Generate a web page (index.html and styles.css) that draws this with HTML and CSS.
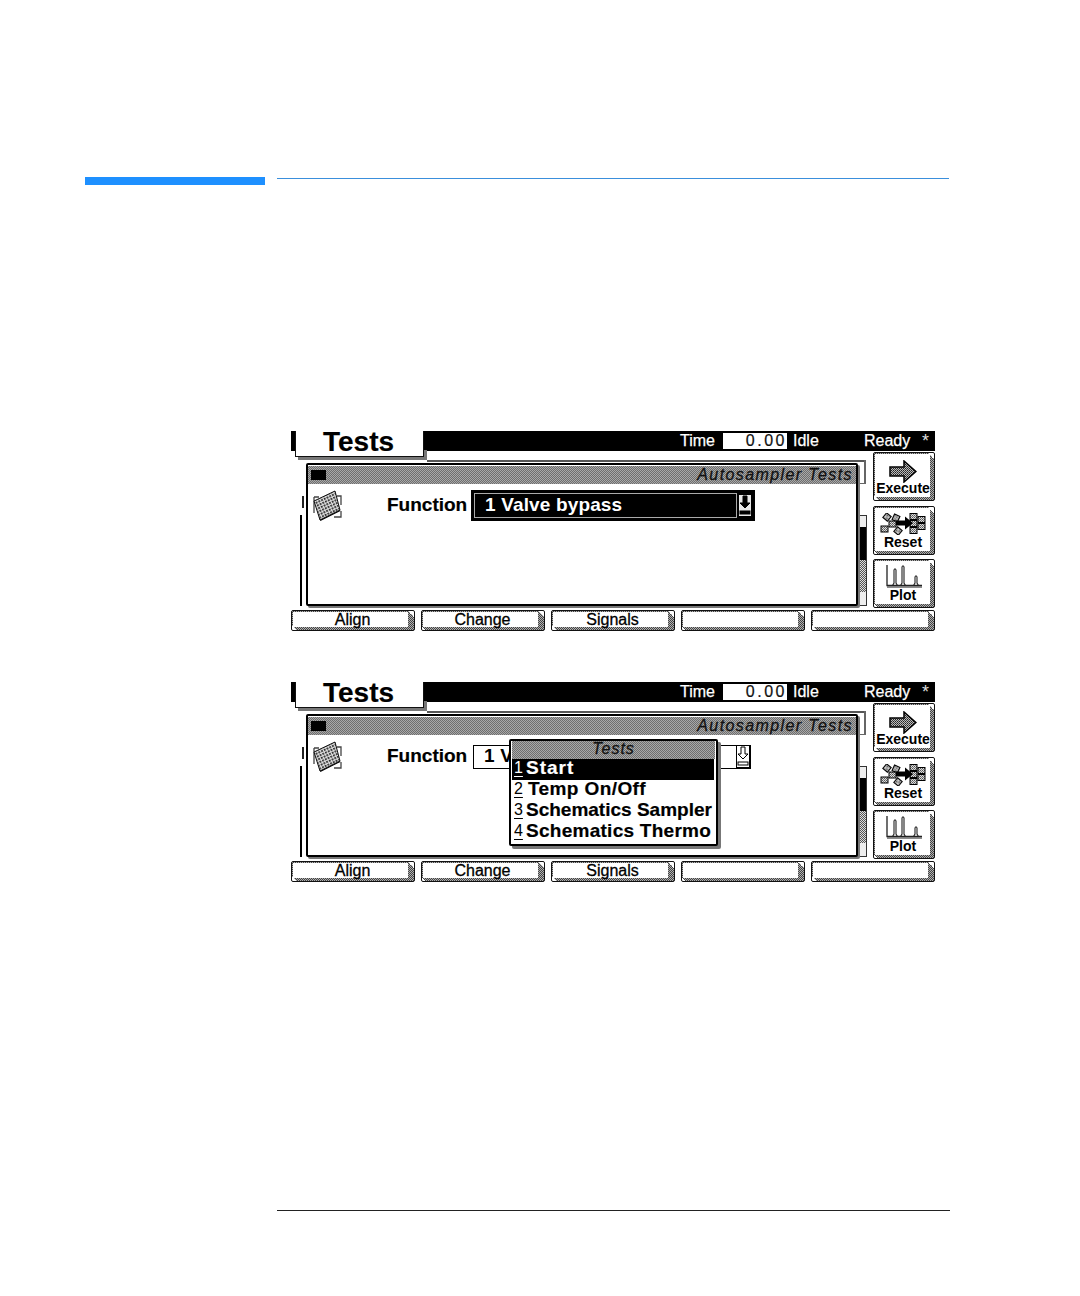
FILE: index.html
```html
<!DOCTYPE html>
<html lang="en">
<head>
<meta charset="utf-8">
<title>Autosampler Tests</title>
<link rel="stylesheet" href="styles.css">
</head>
<body>
<svg class="defs" aria-hidden="true">
  <defs>
    <pattern id="dots" width="2" height="2" patternUnits="userSpaceOnUse"><rect width="2" height="2" fill="#bbb"/><rect width="1" height="1" fill="#222"/><rect x="1" y="1" width="1" height="1" fill="#444"/></pattern>
    <pattern id="dots-light" width="2" height="2" patternUnits="userSpaceOnUse"><rect width="2" height="2" fill="#ddd"/><rect width="1" height="1" fill="#555"/><rect x="1" y="1" width="1" height="1" fill="#777"/></pattern>
    <pattern id="plate" width="3" height="3" patternUnits="userSpaceOnUse" patternTransform="rotate(-25)"><rect width="3" height="3" fill="#ddd"/><rect width="1.800" height="1.800" fill="#222"/></pattern>
    <symbol id="i-plate" viewBox="0 0 29 31">
      <path d="M1 7h5M24 6h4v9M1 7v16M28 21v6h-7" fill="none" stroke="#444" stroke-width="1.300"/>
      <path d="M7 30L27 20" fill="none" stroke="#000" stroke-width="2"/>
      <polygon points="22,1 1,11 7,30 27,20" fill="url(#plate)" stroke="#111" stroke-width="1"/>
    </symbol>
    <symbol id="i-arrow" viewBox="0 0 28 23">
      <polygon points="1,7 15,7 15,1 27,11.500 15,22 15,16 1,16" fill="url(#dots)" stroke="#000" stroke-width="1.500"/>
    </symbol>
    <symbol id="i-reset" viewBox="0 0 46 22">
      <g fill="url(#dots-light)" stroke="#000" stroke-width="1">
        <rect x="4" y="1" width="6" height="6" transform="rotate(40 7 4)"/>
        <rect x="13" y="2" width="6" height="6" transform="rotate(25 16 5)"/>
        <rect x="1" y="13" width="7" height="6"/>
        <rect x="9" y="8" width="7" height="6"/>
        <rect x="15" y="15" width="6" height="6" transform="rotate(40 18 18)"/>
        <rect x="30" y="0.500" width="7" height="6"/>
        <rect x="38" y="3.500" width="7" height="6"/>
        <rect x="30" y="7.500" width="7" height="6"/>
        <rect x="38" y="10.500" width="7" height="6"/>
        <rect x="30" y="14.500" width="7" height="6"/>
      </g>
      <path d="M16 7.500h9v-4l8 6.500-8 6.500v-4h-9z" fill="#000"/>
    </symbol>
    <symbol id="i-plot" viewBox="0 0 38 26">
      <path d="M3 3V23.500H38" fill="none" stroke="#222" stroke-width="1.300"/>
      <path d="M3 25H38" stroke="#666" stroke-width="1.500"/>
      <path d="M8.500 23.500L10 21V8Q11 5.500 12 8V21L13.500 23.500M16.500 23.500L18 21V5Q19 2.500 20 5V21L21.500 23.500M29.500 23.500L31 21V15Q32 12.500 33 15V21L34.500 23.500" fill="none" stroke="#222" stroke-width="1.100"/>
    </symbol>
    <symbol id="i-down" viewBox="0 0 12 21">
      <path d="M4 1h4v7h3l-5 5-5-5h3z" fill="currentColor" stroke="#000"/>
      <rect x="1" y="16" width="10" height="3" fill="currentColor" stroke="#000"/>
    </symbol>
  </defs>
</svg>

<main class="page">
  <div class="rule-top">
    <div class="rule-tab"></div>
    <div class="rule-line"></div>
  </div>

  <div class="screens">
    <section class="screen">
      <header class="topbar">
        <div class="tab">Tests</div>
        <div class="status">
          <span class="st-time">Time</span>
          <span class="st-value">0.00</span>
          <span class="st-idle">Idle</span>
          <span class="st-ready">Ready</span>
          <span class="st-star">*</span>
        </div>
      </header>
      <div class="work">
        <div class="desk">
          <div class="back-edge"></div>
          <div class="back-tick"></div>
          <div class="back-left"></div>
          <div class="back-short"></div>
          <div class="scroll"><div class="scroll-thumb"></div><div class="scroll-rest"></div></div>
          <div class="panel">
            <div class="titlebar"><span class="sysbox"></span><span class="title">Autosampler Tests</span></div>
            <div class="form">
              <svg class="plate"><use href="#i-plate"/></svg>
              <span class="label">Function</span>
              <div class="select is-active">
                <div class="select-inner"><span class="select-text">1 Valve bypass</span></div>
                <svg class="select-arrow"><use href="#i-down"/></svg>
              </div>
            </div>
          </div>
        </div>
        <div class="side">
          <button class="key side-key"><span class="face"><svg class="ic-arrow"><use href="#i-arrow"/></svg><span>Execute</span></span></button>
          <button class="key side-key"><span class="face"><svg class="ic-reset"><use href="#i-reset"/></svg><span>Reset</span></span></button>
          <button class="key side-key"><span class="face"><svg class="ic-plot"><use href="#i-plot"/></svg><span>Plot</span></span></button>
        </div>
      </div>
      <nav class="softkeys">
        <button class="key soft"><span class="face">Align</span></button>
        <button class="key soft"><span class="face">Change</span></button>
        <button class="key soft"><span class="face">Signals</span></button>
        <button class="key soft"><span class="face"></span></button>
        <button class="key soft"><span class="face"></span></button>
      </nav>
    </section>

    <section class="screen">
      <header class="topbar">
        <div class="tab">Tests</div>
        <div class="status">
          <span class="st-time">Time</span>
          <span class="st-value">0.00</span>
          <span class="st-idle">Idle</span>
          <span class="st-ready">Ready</span>
          <span class="st-star">*</span>
        </div>
      </header>
      <div class="work">
        <div class="desk">
          <div class="back-edge"></div>
          <div class="back-tick"></div>
          <div class="back-left"></div>
          <div class="back-short"></div>
          <div class="scroll"><div class="scroll-thumb"></div><div class="scroll-rest"></div></div>
          <div class="panel">
            <div class="titlebar"><span class="sysbox"></span><span class="title">Autosampler Tests</span></div>
            <div class="form">
              <svg class="plate"><use href="#i-plate"/></svg>
              <span class="label">Function</span>
              <div class="select is-plain">
                <div class="select-inner"><span class="select-text">1 V</span></div>
                <svg class="select-arrow"><use href="#i-down"/></svg>
              </div>
            </div>
            <div class="menu">
              <div class="menu-title">Tests</div>
              <div class="menu-item is-current"><span class="num">1</span><span class="item-start">Start</span></div>
              <div class="menu-item"><span class="num">2</span><span class="item-temp">Temp On/Off</span></div>
              <div class="menu-item"><span class="num">3</span><span>Schematics Sampler</span></div>
              <div class="menu-item"><span class="num">4</span><span class="item-thermo">Schematics Thermo</span></div>
            </div>
          </div>
        </div>
        <div class="side">
          <button class="key side-key"><span class="face"><svg class="ic-arrow"><use href="#i-arrow"/></svg><span>Execute</span></span></button>
          <button class="key side-key"><span class="face"><svg class="ic-reset"><use href="#i-reset"/></svg><span>Reset</span></span></button>
          <button class="key side-key"><span class="face"><svg class="ic-plot"><use href="#i-plot"/></svg><span>Plot</span></span></button>
        </div>
      </div>
      <nav class="softkeys">
        <button class="key soft"><span class="face">Align</span></button>
        <button class="key soft"><span class="face">Change</span></button>
        <button class="key soft"><span class="face">Signals</span></button>
        <button class="key soft"><span class="face"></span></button>
        <button class="key soft"><span class="face"></span></button>
      </nav>
    </section>
  </div>

  <div class="rule-bottom"></div>
</main>
</body>
</html>
```

FILE: styles.css
```css
* { box-sizing: border-box; }
html, body { margin: 0; padding: 0; background: #fff; }
body { font-family: "Liberation Sans", Arial, sans-serif; color: #000; }
.defs { display: block; width: 0; height: 0; }

.page { width: 1080px; height: 1296px; padding: 177px 0 0 85px; }

.rule-top { display: flex; align-items: flex-start; gap: 12px; }
.rule-tab { width: 180px; height: 8px; background: #1e90ff; }
.rule-line { width: 672px; height: 1px; margin-top: 1px; background: #3a8fdc; }

.screens { display: flex; flex-direction: column; gap: 51px; margin: 246px 0 0 206px; width: 644px; }
.rule-bottom { width: 673px; height: 1px; margin: 328px 0 0 192px; background: #222; }

.screen { width: 644px; height: 200px; display: flex; flex-direction: column; }

/* top bar */
.topbar { height: 20px; flex: none; display: flex; background: #000; position: relative; }
.tab {
  width: 129px; height: 26px; margin-left: 4px; flex: none;
  background: #fff; border: 1px solid #111; border-top: 0;
  font-size: 28px; font-weight: 700; line-height: 22px; padding-left: 27px;
  box-shadow: 3px 3px 0 #777; -webkit-text-stroke: .2px #000;
  clip-path: polygon(0 0, 100% 0, 100% 19px, calc(100% + 4px) 19px, calc(100% + 4px) calc(100% + 4px), 0 calc(100% + 4px));
  z-index: 1;
}
.status { flex: 1; display: flex; align-items: center; color: #fff; font-size: 16px; line-height: 18px; height: 18px; margin-top: 1px; }
.st-time { margin-left: 256px; width: 43px; -webkit-text-stroke: .25px #fff; }
.st-value { width: 64px; height: 16px; background: #fff; color: #111; text-align: right; letter-spacing: 2.500px; line-height: 16px; -webkit-text-stroke: .2px #111; }
.st-idle { margin-left: 6px; width: 71px; -webkit-text-stroke: .25px #fff; }
.st-ready { width: 58px; -webkit-text-stroke: .25px #fff; }
.st-star { font-size: 18px; color: #ddd; }

/* working area */
.work { height: 159px; flex: none; display: flex; padding-top: 1px; }
.desk { width: 582px; flex: none; position: relative; }

.back-edge { position: absolute; left: 136px; right: 7px; top: 8px; height: 2px; background: #555; }
.back-tick { position: absolute; right: 7px; top: 8px; width: 10px; height: 24px; border-right: 2px solid #666; border-bottom: 1px solid #666; }
.back-left { position: absolute; left: 9px; top: 63px; width: 2px; height: 91px; background: #000; }
.back-short { position: absolute; left: 11px; top: 44px; width: 2px; height: 12px; background: #222; }
.scroll { position: absolute; left: 566px; top: 63px; width: 10px; height: 91px; border: 1px solid #333; background: #eee; padding-top: 11px; }
.scroll-thumb { height: 33px; background: #000; }
.scroll-rest { height: 32px; background: repeating-conic-gradient(#555 0 25%, #ddd 0 50%) 0 0 / 2px 2px; }

.panel {
  position: absolute; left: 15px; top: 11px; width: 552px; height: 143px;
  background: #fff; border: 2px solid #000; border-radius: 2px;
  box-shadow: 2px 2px 0 #777;
}
.titlebar {
  height: 18px; margin: 1px 0 0; display: flex; align-items: center; justify-content: space-between;
  padding: 0 3px;
  background: repeating-conic-gradient(#6e6e6e 0 25%, #a8a8a8 0 50%) 0 0 / 2px 2px;
}
.sysbox { width: 15px; height: 10px; background: #000; }
.title { font-size: 16px; font-style: italic; letter-spacing: 1.400px; color: #111; line-height: 18px; white-space: nowrap; -webkit-text-stroke: .3px #111; }

.form { display: flex; align-items: center; height: 31px; margin-top: 6px; padding-left: 5px; }
.plate { width: 29px; height: 31px; flex: none; }
.label { margin-left: 45px; font-size: 19px; font-weight: 700; line-height: 20px; padding-bottom: 2px; height: 22px; width: 84px; flex: none; -webkit-text-stroke: .2px #000; }

.select { display: flex; align-items: center; flex: none; }
.select-text { font-size: 19px; font-weight: 700; white-space: nowrap; line-height: 20px; padding-bottom: 2px; letter-spacing: .15px; }
.select-arrow { width: 12px; height: 21px; flex: none; }
.is-active { width: 284px; height: 31px; background: #000; padding: 3px; gap: 2px; color: #fff; }
.is-active .select-inner { flex: 1; height: 25px; border: 1px solid #aaa; padding-left: 10px; color: #fff; display: flex; align-items: center; }
.is-active .select-arrow { color: #000; background: #e8e8e8; margin-right: 1px; }
.is-plain { width: 278px; height: 24px; margin-left: 2px; border: 1.500px solid #000; background: #fff; justify-content: space-between; }
.is-plain .select-inner { padding-left: 10px; display: flex; align-items: center; }
.is-plain .select-arrow { color: #fff; border: 1px solid #000; width: 14px; height: 23px; }

/* popup menu */
.menu {
  position: absolute; left: 201px; top: 23px; width: 209px; height: 107px;
  background: #fff; border: 2px solid #000; border-radius: 2px; padding: 0 1px;
  box-shadow: 3px 3px 0 #777;
}
.menu-title {
  height: 18px; text-align: center; font-size: 16px; font-style: italic; letter-spacing: 1px; line-height: 16px; color: #111; -webkit-text-stroke: .3px #111;
  background: repeating-conic-gradient(#6e6e6e 0 25%, #a8a8a8 0 50%) 0 0 / 2px 2px;
}
.menu-item { height: 21px; display: flex; align-items: center; padding-bottom: 3px; font-size: 19px; font-weight: 700; line-height: 18px; white-space: nowrap; -webkit-text-stroke: .2px currentColor; }
.is-current { background: #000; color: #fff; margin-right: 1px; }
.num { width: 14px; flex: none; padding-left: 2px; font-size: 16px; font-weight: 400; text-decoration: underline; text-underline-offset: 3px; -webkit-text-stroke: 0; }
.item-start { letter-spacing: 1px; }
.item-temp { letter-spacing: .4px; margin-left: 2px; }
.item-thermo { letter-spacing: .27px; }

/* buttons */
.key {
  display: flex; margin: 0; padding: 0; font: inherit; color: #000;
  border: 1px solid #111; border-radius: 2px;
  background:
    linear-gradient(to bottom left, #fff 50%, transparent 50%) top right / 6px 6px no-repeat,
    linear-gradient(to top right, #fff 50%, transparent 50%) bottom left / 4px 4px no-repeat,
    repeating-conic-gradient(#444 0 25%, #b0b0b0 0 50%) 0 0 / 2px 2px;
}
.face { flex: 1; background: #fff; display: flex; flex-direction: column; align-items: center; }

.side { display: flex; flex-direction: column; gap: 5px; width: 62px; }
.side-key { height: 49px; width: 62px; }
.side-key:last-child { margin-top: -1px; }
.side-key .face { margin: 1px 4px 3px 1px; padding: 0 0 1.500px 1px; font-size: 14px; font-weight: 700; line-height: 15px; justify-content: flex-end; white-space: nowrap; }
.side-key .face svg { flex: none; }
.ic-arrow { width: 28px; height: 23px; margin-bottom: -2px; }
.ic-reset { width: 46px; height: 22px; }
.ic-plot { width: 38px; height: 26px; }

.softkeys { height: 21px; flex: none; display: flex; gap: 6px; }
.soft { width: 124px; height: 21px; flex: none; }
.soft .face { margin: 1px 6px 3px 1px; padding-left: 4px; font-size: 16px; line-height: 16px; -webkit-text-stroke: .3px #000; justify-content: center; }
```
